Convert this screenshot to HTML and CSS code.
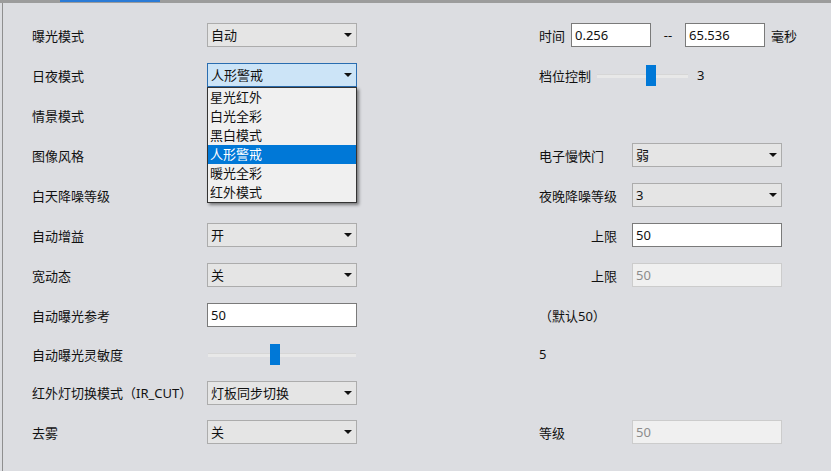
FILE: index.html
```html
<!DOCTYPE html>
<html lang="zh-CN">
<head>
  <meta charset="UTF-8">
  <title>图像参数</title>
  <link rel="stylesheet" href="styles.css">
</head>
<body>
  <div class="tabbar"><div class="tab-active"></div></div>

  <div class="panel">
    <!-- 曝光模式 / 时间 -->
    <div class="row">
      <div class="col-left">
        <span class="lbl">曝光模式</span>
        <div class="combo"><span>自动</span><i class="caret"></i></div>
      </div>
      <div class="col-right">
        <span class="lbl-inline">时间</span>
        <input class="field short first" type="text" value="0.256">
        <span class="dash">--</span>
        <input class="field short" type="text" value="65.536">
        <span class="unit">毫秒</span>
      </div>
    </div>

    <!-- 日夜模式 (open) / 档位控制 -->
    <div class="row">
      <div class="col-left">
        <span class="lbl">日夜模式</span>
        <div class="combo-wrap">
          <div class="combo focused"><span>人形警戒</span><i class="caret"></i></div>
          <ul class="popup">
            <li>星光红外</li>
            <li>白光全彩</li>
            <li>黑白模式</li>
            <li class="selected">人形警戒</li>
            <li>暖光全彩</li>
            <li>红外模式</li>
          </ul>
        </div>
      </div>
      <div class="col-right">
        <span class="lbl-inline">档位控制</span>
        <div class="slider slider-small"><div class="thumb"></div></div>
        <span class="slider-val">3</span>
      </div>
    </div>

    <div class="row">
      <div class="col-left">
        <span class="lbl">情景模式</span>
      </div>
    </div>

    <div class="row">
      <div class="col-left">
        <span class="lbl">图像风格</span>
      </div>
      <div class="col-right">
        <span class="lbl-r">电子慢快门</span>
        <div class="combo"><span>弱</span><i class="caret"></i></div>
      </div>
    </div>

    <div class="row">
      <div class="col-left">
        <span class="lbl">白天降噪等级</span>
      </div>
      <div class="col-right">
        <span class="lbl-r">夜晚降噪等级</span>
        <div class="combo"><span>3</span><i class="caret"></i></div>
      </div>
    </div>

    <div class="row">
      <div class="col-left">
        <span class="lbl">自动增益</span>
        <div class="combo"><span>开</span><i class="caret"></i></div>
      </div>
      <div class="col-right">
        <span class="lbl-r align-right">上限</span>
        <input class="field" type="text" value="50">
      </div>
    </div>

    <div class="row">
      <div class="col-left">
        <span class="lbl">宽动态</span>
        <div class="combo"><span>关</span><i class="caret"></i></div>
      </div>
      <div class="col-right">
        <span class="lbl-r align-right">上限</span>
        <input class="field" type="text" value="50" disabled>
      </div>
    </div>

    <div class="row">
      <div class="col-left">
        <span class="lbl">自动曝光参考</span>
        <input class="field" type="text" value="50">
      </div>
      <div class="col-right">
        <span class="note">（默认50）</span>
      </div>
    </div>

    <div class="row row-slider">
      <div class="col-left">
        <span class="lbl">自动曝光灵敏度</span>
        <div class="slider slider-wide"><div class="thumb"></div></div>
      </div>
      <div class="col-right">
        <span class="note">5</span>
      </div>
    </div>

    <div class="row row-ir">
      <div class="col-left">
        <span class="lbl">红外灯切换模式（IR_CUT）</span>
        <div class="combo"><span>灯板同步切换</span><i class="caret"></i></div>
      </div>
    </div>

    <div class="row">
      <div class="col-left">
        <span class="lbl">去雾</span>
        <div class="combo"><span>关</span><i class="caret"></i></div>
      </div>
      <div class="col-right">
        <span class="lbl-r">等级</span>
        <input class="field" type="text" value="50" disabled>
      </div>
    </div>
  </div>
</body>
</html>
```

FILE: styles.css
```css
/* Reset */
* {
  margin: 0;
  padding: 0;
  box-sizing: border-box;
}

html, body {
  height: 100%;
  overflow: hidden;
}

body {
  background: #dcdde1;
  font-family: "Noto Sans", "Noto Sans CJK SC", sans-serif;
  font-size: 13px;
  color: #111;
}

/* Top tab strip */
.tabbar {
  height: 3px;
  background: #9c9c9c;
  position: relative;
}

.tab-active {
  margin-left: 60px;
  width: 100px;
  height: 2px;
  background: #2b7bd6;
}

/* Form panel */
.panel {
  margin-left: 2px;
  border-left: 1px solid #8f8f8f;
  height: calc(100% - 3px);
  padding: 12px 0 0 29px;
}

.row {
  display: flex;
  align-items: center;
  height: 40px;
}

.row-slider {
  height: 38px;
}

.row-ir {
  height: 39px;
}

.col-left {
  display: flex;
  align-items: center;
  width: 507px;
}

.col-right {
  display: flex;
  align-items: center;
}

.lbl {
  width: 175px;
  white-space: nowrap;
}

.lbl-r {
  width: 93px;
  white-space: nowrap;
}

.lbl-r.align-right {
  text-align: right;
  padding-right: 15px;
}

.lbl-inline {
  white-space: nowrap;
}

/* Combo box */
.combo-wrap {
  position: relative;
}

.combo {
  display: flex;
  align-items: center;
  justify-content: space-between;
  width: 150px;
  height: 24px;
  padding: 0 4px 0 3px;
  background: #e5e5e5;
  border: 1px solid #acacac;
  line-height: 22px;
}

.combo.focused {
  background: #cce4f7;
  border-color: #2a6db0;
}

.caret {
  width: 0;
  height: 0;
  border-left: 4px solid transparent;
  border-right: 4px solid transparent;
  border-top: 4px solid #111;
}

/* Drop-down list */
.popup {
  position: absolute;
  top: 24px;
  left: 0;
  width: 150px;
  list-style: none;
  background: #f0f0f0;
  border: 1px solid #333;
  box-shadow: 2px 2px 3px rgba(0, 0, 0, 0.45);
  z-index: 10;
}

.popup li {
  height: 19px;
  line-height: 19px;
  padding-left: 2px;
}

.popup li.selected {
  background: #0078d7;
  color: #fff;
}

/* Text fields */
.field {
  width: 150px;
  height: 24px;
  padding: 0 3px;
  border: 1px solid #7a7a7a;
  background: #fff;
  font: inherit;
  color: #111;
  outline: none;
}

.field.short {
  width: 80px;
}

.field.first {
  margin-left: 6px;
}

.field:disabled {
  background: #f0f0f0;
  border-color: #cccccc;
  color: #8c8c8c;
}

.dash {
  width: 34px;
  text-align: center;
}

.unit {
  margin-left: 6px;
}

.note {
  white-space: nowrap;
}

/* Sliders */
.slider {
  position: relative;
  height: 21px;
}

.slider::before {
  content: "";
  position: absolute;
  left: 0;
  right: 0;
  top: 9px;
  height: 3px;
  background: #e8e8e8;
  border-top: 1px solid #d6d6d6;
}

.slider .thumb {
  position: absolute;
  top: 0;
  width: 10px;
  height: 21px;
  background: #0078d7;
}

.slider-wide {
  width: 148px;
  margin-left: 1px;
}

.slider-wide .thumb {
  left: 62px;
}

.slider-small {
  width: 91px;
  margin-left: 6px;
}

.slider-small .thumb {
  left: 49px;
}

.slider-val {
  margin-left: 9px;
}
```
